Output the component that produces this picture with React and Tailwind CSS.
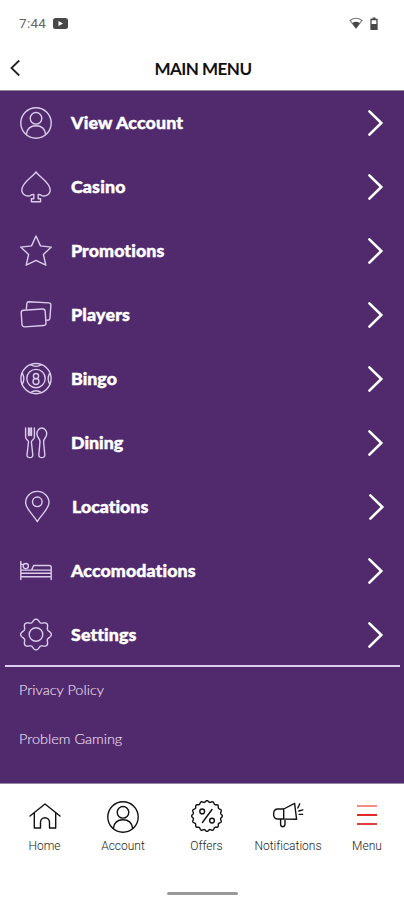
import React from "react";

// Closed outline of a disc whose radius ripples `lobes` times.
function ripple(cx, cy, r, amp, lobes, phase = 0) {
  const pts = [];
  for (let i = 0; i < 240; i++) {
    const a = (i / 240) * Math.PI * 2;
    const rr = r + amp * Math.cos(lobes * a + phase);
    pts.push(`${(cx + rr * Math.cos(a)).toFixed(2)} ${(cy + rr * Math.sin(a)).toFixed(2)}`);
  }
  return `M${pts.join("L")}Z`;
}

function Glyph({ children, className = "h-8 w-8" }) {
  return (
    <svg viewBox="0 0 32 32" className={`block shrink-0 overflow-visible ${className}`} fill="none" stroke="currentColor" strokeWidth="1.4" strokeLinejoin="round" strokeLinecap="round">
      {children}
    </svg>
  );
}

const Person = () => (
  <>
    <circle cx="16" cy="16" r="15.2" />
    <circle cx="16" cy="11.3" r="5.8" />
    <path d="M6.3 27.3C7.2 21.4 11 18.8 16 18.8s8.8 2.6 9.7 8.5" />
  </>
);
const Spade = () => (
  <path d="M16 .8C13.6 5.2 1.8 11.4 1.8 18.8c0 5.6 6.4 7.8 9.8 4.9l2.2-.3v4.4h-2.4v3h9.2v-3h-2.4v-4.4l2.2.3c3.4 2.9 9.8.7 9.8-4.9C30.2 11.4 18.4 5.2 16 .8Z" />
);
const Star = () => <path d="m16 1 4.5 9.9 10.8 1.2-7.9 7.4 2.4 10.6L16 25.4l-9.8 4.7 2.4-10.6-7.9-7.4 10.8-1.2Z" />;
const Cards = () => (
  <>
    <rect x="1.6" y="10.6" width="24" height="16.6" rx="2.5" transform="rotate(-4 13.5 19)" />
    <path d="m6.4 9.8.5-5.3a2 2 0 0 1 2-1.8l20 1.2a2 2 0 0 1 2 2.1l-1 13.4a2 2 0 0 1-2 1.8l-1.4-.1" />
  </>
);
const Ball = () => (
  <>
    <circle cx="16" cy="15.6" r="15.1" />
    <circle cx="16" cy="15.6" r="9.2" />
    <circle cx="16" cy="13.1" r="2.6" />
    <circle cx="16" cy="18.5" r="3" />
    <path d="M10.5 1.7q5.5 3.4 11 0M10.5 29.5q5.5-3.4 11 0M2.3 10.1q3 5.5 0 11M29.7 10.1q-3 5.5 0 11" />
  </>
);
const Cutlery = () => (
  <>
    <path d="M5.6 1v9c0 2.6 2.9 3.2 2.9 5l-1.5 13c-.2 3.5 6 3.5 5.8 0L11.4 15c0-1.8 3-2.4 3-5V1M8.5 1v7.6M11.5 1v7.6M10 1v7.6" />
    <path d="M21.8 1c-3 0-4.9 3-4.9 6 0 3.5 3.1 4.5 3.1 7.8l-1.2 13.2c-.2 3.5 6.2 3.5 6 0l-1.2-13.2c0-3.3 3.1-4.3 3.1-7.8 0-3-1.9-6-4.9-6Z" />
  </>
);
const Pin = () => (
  <>
    <path d="M16.3 30.6C12.6 24.1 4.6 17.8 4.6 11.6a11.7 11.2 0 0 1 23.4 0c0 6.2-8 12.5-11.7 19Z" />
    <circle cx="16.3" cy="10.8" r="4.8" />
  </>
);
const Bed = () => (
  <>
    <path d="M.8 6.5v18M.8 18.2h30.4M.8 21.7h30.4M31.2 24.5V12.3q0-1.8-1.8-1.8H13.6l-2 4.6H31M.8 15.1h10.8" />
    <circle cx="5.8" cy="11.1" r="2.6" />
    <path d="m.8 8.8 2.5 1" />
  </>
);
const Gear = () => (
  <>
    <path d={ripple(16, 15.5, 13.9, 1.45, 8)} />
    <circle cx="16" cy="15.5" r="6.8" />
  </>
);

const menu = [
  ["View Account", Person, "pl-5 pr-5", "tracking-[0.15px]"],
  ["Casino", Spade, "pl-5 pr-5", "tracking-[0.15px]"],
  ["Promotions", Star, "pl-5 pr-5", "tracking-[0.1px]"],
  ["Players", Cards, "pl-5 pr-5", "tracking-[0.2px]"],
  ["Bingo", Ball, "pl-5 pr-5", ""],
  ["Dining", Cutlery, "pl-5 pr-5", ""],
  ["Locations", Pin, "pl-[21px] pr-[19px]", ""],
  ["Accomodations", Bed, "pl-5 pr-5", "tracking-[0.1px]"],
  ["Settings", Gear, "pl-5 pr-5", "tracking-[0.1px]"],
];

const Home = () => <path d="m1 13 15-12 15 12M5.3 10.2v14.8h6.2v-5.7a4.5 4.5 0 0 1 9 0v5.7h6.2V10.2" />;
const Percent = () => (
  <>
    <path d={ripple(16, 16, 14.6, 0.75, 16)} />
    <path d="m21 9.5-9.6 13" />
    <circle cx="11.2" cy="11.4" r="2.4" />
    <circle cx="21" cy="20.6" r="2.4" />
  </>
);
const Megaphone = () => (
  <>
    <path d="M11.7 8H5.2q-3.6.4-3.6 5t3.6 5h6.5ZM11.7 8 22.6 2.4 24.6 18.3l-12.9-.3M8.6 18.2v5.2q.3 2.4 2.2 2.4t2.2-2.4v-5.2" />
    <path d="m25.8 7 2-4.2M26.8 10l4-1.2M27.2 13.4h3.4" />
  </>
);

function Tab({ label, className, children }) {
  return (
    <div className={`flex flex-col items-center ${className}`}>
      <div className="flex h-8 items-center justify-center">{children}</div>
      <span className="mt-[5px] text-[12px] leading-4 font-light whitespace-nowrap text-[#222]">{label}</span>
    </div>
  );
}

export default function App() {
  return (
    <div className="flex h-[900px] w-[404px] flex-col overflow-hidden bg-white font-['Lato',sans-serif] [font-variant-ligatures:none]">
      <div className="flex h-[46px] items-center justify-between pr-[26px] pl-[19px]">
        <div className="flex items-center gap-[7px]">
          <span className="font-['Roboto',sans-serif] text-[13.5px] leading-4 tracking-[0.3px] text-[#666]">7:44</span>
          <svg viewBox="0 0 15 11" className="h-[11px] w-[15px]">
            <rect width="15" height="11" rx="2.5" fill="#484848" />
            <path d="M5.5 3v5l4.5-2.5Z" fill="#fff" />
          </svg>
        </div>
        <div className="flex items-center gap-[7px]">
          <svg viewBox="0 0 14 12" className="h-3 w-3.5">
            <path d="M1 3.5Q7-1 13 3.5L7 11Z" fill="none" stroke="#777" strokeWidth="1.2" strokeLinejoin="round" />
            <path d="M3.2 6Q7 3.5 10.8 6L7 11.5Z" fill="#484848" />
          </svg>
          <svg viewBox="0 0 8 13" className="h-[13px] w-2">
            <path d="M1 2.5h6v9.9H1Z" fill="none" stroke="#484848" strokeWidth="1.3" />
            <path d="M2.5.5h3v2h-3ZM1 7h6v5.3H1Z" fill="#484848" />
          </svg>
        </div>
      </div>
      <header className="flex h-11 items-center">
        <svg viewBox="0 0 12 18" className="ml-[9px] h-[18px] w-3" fill="none" stroke="#222" strokeWidth="1.8">
          <path d="M10.2 1.5 2.5 9l7.7 7.5" />
        </svg>
        <h1 className="mt-px mr-[19px] flex-1 text-center text-[17px] leading-5 font-bold tracking-[-0.5px] text-[#111]">MAIN MENU</h1>
      </header>
      <main className="h-[694px] border-y border-[#93889f] bg-[#502a6c] text-white">
        <ul>
          {menu.map(([label, Icon, pad, track]) => (
            <li key={label} className={`flex h-16 items-center ${pad}`}>
              <span className="text-[#dccbec]">
                <Glyph><Icon /></Glyph>
              </span>
              <span className={`mb-[2px] ml-[19px] flex-1 text-[17.8px] leading-6 font-black [-webkit-text-stroke:0.45px_white] ${track}`}>{label}</span>
              <svg viewBox="0 0 17 28" className="h-7 w-[17px]" fill="none" stroke="#fff" strokeWidth="2.6" strokeLinecap="round">
                <path d="M2.4 2.4 14.3 14 2.4 25.6" />
              </svg>
            </li>
          ))}
        </ul>
        <div className="-mt-[2px] mr-[4px] ml-[5px] h-[1.5px] bg-[#e0cdf2]" />
        <nav className="flex flex-col gap-[25px] pt-[11.5px] pl-[19px] text-[14.5px] leading-6 font-light text-[#e6dcef] [-webkit-text-stroke:0.15px_#e6dcef]">
          <a>Privacy Policy</a>
          <a>Problem Gaming</a>
        </nav>
      </main>
      <footer className="flex h-[116px] flex-col items-center">
        <div className="flex w-full pt-[17px] font-['Roboto',sans-serif] text-[#111]">
          <Tab label="Home" className="ml-[14px] w-[61px]"><Glyph className="mt-1 h-8 w-8"><Home /></Glyph></Tab>
          <Tab label="Account" className="ml-[16px] w-[64px]"><Glyph><Person /></Glyph></Tab>
          <Tab label="Offers" className="ml-[21px] w-[61px]"><Glyph className="-mt-[3px] h-8 w-8"><Percent /></Glyph></Tab>
          <Tab label="Notifications" className="ml-[14px] w-[74px]"><Glyph><Megaphone /></Glyph></Tab>
          <Tab label="Menu" className="ml-[12px] w-[60px]">
            <span className="-mt-[4px] flex flex-col gap-[7px]">
              <i className="h-[2px] w-5 bg-[#f58b84]" />
              <i className="h-[2px] w-5 bg-[#e22a22]" />
              <i className="h-[2px] w-5 bg-[#dc4038]" />
            </span>
          </Tab>
        </div>
        <div className="mt-[38px] h-[3px] w-[71px] rounded-full bg-[#999]" />
      </footer>
    </div>
  );
}
